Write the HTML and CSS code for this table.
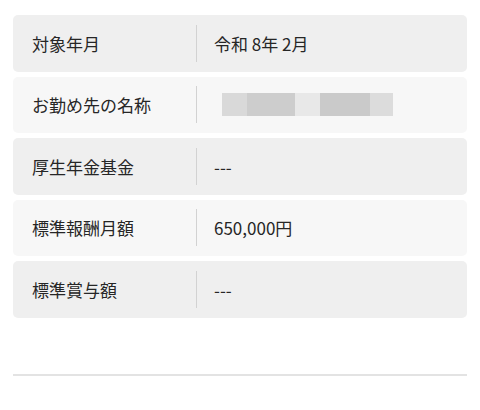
FILE: index.html
```html
<!DOCTYPE html>
<html lang="ja">
<head>
<meta charset="utf-8">
<link rel="stylesheet" href="styles.css">
</head>
<body>
<div class="page">
  <div class="list">
    <div class="row odd"><div class="label">対象年月</div><div class="sep"></div><div class="value">令和 8年 2月</div></div>
    <div class="row even"><div class="label">お勤め先の名称</div><div class="sep"></div><div class="value"><div class="redact"><span class="r1"></span><span class="r2"></span><span class="r3"></span><span class="r4"></span><span class="r5"></span></div></div></div>
    <div class="row odd"><div class="label">厚生年金基金</div><div class="sep"></div><div class="value">---</div></div>
    <div class="row even"><div class="label">標準報酬月額</div><div class="sep"></div><div class="value">650,000円</div></div>
    <div class="row odd"><div class="label">標準賞与額</div><div class="sep"></div><div class="value">---</div></div>
  </div>
  <div class="rule"></div>
</div>
</body>
</html>
```
FILE: styles.css
```css
html, body { margin: 0; padding: 0; background: #fff; }
body { font-family: "Noto Sans CJK JP", "Noto Sans", sans-serif; color: #262626; }
.page { padding: 15px 13px 0 13px; width: 454px; }
.list { display: flex; flex-direction: column; gap: 5px; }
.row { display: flex; align-items: center; height: 56.5px; border-radius: 5px; }
.odd { background: #efefef; }
.even { background: #f7f7f7; }
.label { padding-left: 19px; font-size: 17px; line-height: 1; box-sizing: border-box; width: 183px; }
.sep { width: 1px; height: 37px; background: #d2d2d2; }
.value { padding-left: 17px; font-size: 17px; line-height: 1; }
.redact { display: flex; height: 23px; margin-left: 8px; }
.redact span { display: block; height: 100%; }
.r1 { width: 25px; background: #d9d9d9; }
.r2 { width: 48px; background: #cdcdcd; }
.r3 { width: 25px; background: #e8e8e8; }
.r4 { width: 50px; background: #cacaca; }
.r5 { width: 23px; background: #dcdcdc; }
.rule { margin-top: 56px; height: 2px; background: #e3e3e3; }
```
